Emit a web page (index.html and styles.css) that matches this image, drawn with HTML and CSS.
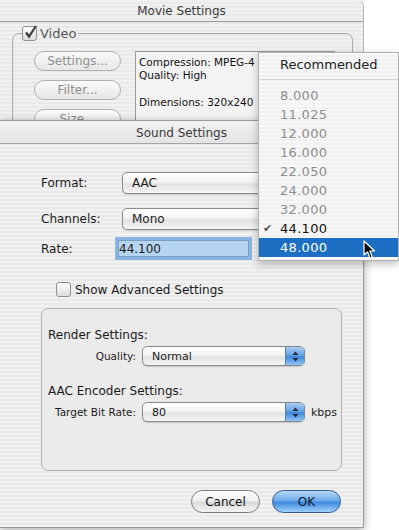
FILE: index.html
```html
<!DOCTYPE html>
<html lang="en">
<head>
    <meta charset="UTF-8">
    <title>Sound Settings</title>
    <link rel="stylesheet" href="styles.css">
</head>
<body>
<div class="desktop">

    <!-- back window -->
    <div class="window movie">
        <div class="titlebar">Movie Settings</div>
        <fieldset class="video-box">
            <legend>
                <span class="check on">
                    <svg width="15" height="15" viewBox="0 0 15 15"><path d="M3 7.5 L6 11.5 L13 1" fill="none" stroke="#3a3a3a" stroke-width="2.2"/></svg>
                </span>
                Video
            </legend>
            <div class="video-content">
                <div class="btn-col">
                    <span class="pill">Settings...</span>
                    <span class="pill">Filter...</span>
                    <span class="pill">Size...</span>
                </div>
                <div class="info">
                    <div>Compression: MPEG-4</div>
                    <div>Quality: High</div>
                    <div class="gap">Dimensions: 320x240</div>
                </div>
            </div>
        </fieldset>
    </div>

    <!-- front window -->
    <div class="window sound">
        <div class="titlebar">Sound Settings</div>
        <div class="sound-body">
            <div class="row row-format">
                <label>Format:</label>
                <div class="popup big"><span>AAC</span><i class="cap"></i></div>
            </div>
            <div class="row row-channels">
                <label>Channels:</label>
                <div class="popup big"><span>Mono</span><i class="cap"></i></div>
            </div>
            <div class="row row-rate">
                <label>Rate:</label>
                <div class="field">44.100</div>
            </div>

            <div class="advanced">
                <span class="check"></span>
                Show Advanced Settings
            </div>

            <div class="group">
                <h3>Render Settings:</h3>
                <div class="sub-row">
                    <label>Quality:</label>
                    <div class="popup small"><span>Normal</span><i class="cap blue"><svg width="7" height="11" viewBox="0 0 7 11"><path d="M3.5 0.5 L6.5 4 H0.5 Z M3.5 10.5 L6.5 7 H0.5 Z" fill="#1d2a44"/></svg></i></div>
                </div>
                <h3 class="second">AAC Encoder Settings:</h3>
                <div class="sub-row">
                    <label>Target Bit Rate:</label>
                    <div class="popup small"><span>80</span><i class="cap blue"><svg width="7" height="11" viewBox="0 0 7 11"><path d="M3.5 0.5 L6.5 4 H0.5 Z M3.5 10.5 L6.5 7 H0.5 Z" fill="#1d2a44"/></svg></i></div>
                    <span class="unit">kbps</span>
                </div>
            </div>

            <div class="buttons">
                <button class="cancel">Cancel</button>
                <button class="ok">OK</button>
            </div>
        </div>
    </div>

    <!-- open popup menu -->
    <div class="menu">
        <div class="menu-head">Recommended</div>
        <ul>
            <li class="off">8.000</li>
            <li class="off">11.025</li>
            <li class="off">12.000</li>
            <li class="off">16.000</li>
            <li class="off">22.050</li>
            <li class="off">24.000</li>
            <li class="off">32.000</li>
            <li class="checked">44.100</li>
            <li class="selected">48.000</li>
        </ul>
    </div>

    <svg class="cursor" width="13" height="20" viewBox="0 0 13 20">
        <path d="M1 1 L1 15 L4.5 11.8 L7 18 L9.2 17 L6.8 11 L11.5 11 Z" fill="#000" stroke="#fff" stroke-width="1.2" stroke-linejoin="round"/>
    </svg>
</div>
</body>
</html>
```

FILE: styles.css
```css
body {
    margin: 0;
    background-color: #fff;
    font-family: "DejaVu Sans", sans-serif;
    color: #1a1a1a;
}
.desktop {
    position: relative;
    width: 399px;
    height: 530px;
    overflow: hidden;
}
.window {
    position: absolute;
    left: 0;
    box-sizing: border-box;
    width: 364px;
    background: repeating-linear-gradient(to bottom, #f1f1f1 0, #f1f1f1 2px, #e9e9e9 2px, #e9e9e9 4px);
}
.titlebar {
    box-sizing: border-box;
    height: 22px;
    line-height: 22px;
    text-align: center;
    font-size: 12px;
    color: #3a3a3a;
    border-bottom: 1px solid #9c9c9c;
}

/* movie settings */
.movie {
    top: 0;
    height: 140px;
    border-right: 1px solid #b4b4b4;
    border-top-right-radius: 6px;
}
.video-box {
    margin: 4px 10px 0 12px;
    padding: 10px 0 0 21px;
    height: 120px;
    border: 1px solid #a9a9a9;
    border-radius: 7px;
}
.video-box legend {
    display: flex;
    align-items: center;
    gap: 3px;
    padding: 0 2px 0 0;
    margin-left: -12px;
    font-size: 13px;
    color: #555;
}
.check {
    display: inline-block;
    box-sizing: border-box;
    width: 15px;
    height: 15px;
    border: 1px solid #8f8f8f;
    border-radius: 3px;
    background: linear-gradient(#ffffff, #dcdcdc);
}
.check svg {
    display: block;
    margin: -2px 0 0 0;
}
.video-content {
    display: flex;
    gap: 14px;
}
.btn-col {
    display: flex;
    flex-direction: column;
    gap: 9px;
}
.pill {
    box-sizing: border-box;
    width: 87px;
    height: 20px;
    line-height: 18px;
    text-align: center;
    font-size: 12px;
    color: #8e8e8e;
    border: 1px solid #b0b0b0;
    border-radius: 10px;
    background: linear-gradient(#fbfbfb, #e6e6e6);
}
.info {
    box-sizing: border-box;
    width: 200px;
    height: 90px;
    padding: 4px 0 0 3px;
    font-size: 10.5px;
    line-height: 13px;
    color: #111;
    border: 1px solid #9a9a9a;
    border-right: none;
    background: #f3f3f3;
}
.info .gap {
    margin-top: 14px;
}

/* sound settings */
.sound {
    top: 120px;
    height: 408px;
    border: 1px solid #9a9a9a;
    border-left: none;
    border-radius: 0 5px 0 0;
    box-shadow: 0 2px 9px rgba(0, 0, 0, 0.35);
}
.sound .titlebar {
    height: 23px;
    line-height: 24px;
    background: linear-gradient(#f2f2f2, #e4e4e4);
    border-bottom-color: #a4a4a4;
}
.sound-body {
    padding: 28px 0 0 41px;
}
.row {
    display: flex;
    align-items: center;
    font-size: 12px;
}
.row label {
    width: 81px;
}
.row-channels {
    margin-top: 14px;
}
.row-rate {
    margin-top: 10px;
}
.popup {
    position: relative;
    box-sizing: border-box;
    display: flex;
    align-items: center;
    border: 1px solid #8a8a8a;
    border-radius: 5px;
    background: linear-gradient(#ffffff, #f3f3f3 45%, #e2e2e2 55%, #f4f4f4);
    box-shadow: 0 1px 1px rgba(0, 0, 0, 0.15);
}
.popup span {
    padding-left: 9px;
}
.popup.big {
    width: 220px;
    height: 22px;
    font-size: 12px;
}
.popup.small {
    width: 163px;
    height: 20px;
    font-size: 11px;
}
.cap {
    margin-left: auto;
    width: 18px;
    align-self: stretch;
    display: flex;
    align-items: center;
    justify-content: center;
    border-radius: 0 4px 4px 0;
}
.cap.blue {
    background: linear-gradient(#a9cdf3, #5f9ee3 50%, #3f86d8 52%, #8ec3f5);
    border-left: 1px solid #5a7fb0;
}
.field {
    box-sizing: border-box;
    width: 131px;
    height: 17px;
    margin-left: -4px;
    padding-left: 0;
    line-height: 17px;
    font-size: 12px;
    background: #b6d5f2;
    border: 1px solid #7d9dc4;
    box-shadow: 0 0 0 3px #8ab4e2;
}
.advanced {
    display: flex;
    align-items: center;
    gap: 4px;
    margin: 25px 0 0 15px;
    font-size: 12px;
}
.group {
    box-sizing: border-box;
    width: 301px;
    height: 163px;
    margin-top: 11px;
    padding: 19px 0 0 6px;
    border: 1px solid #b2b2b2;
    border-radius: 7px;
    background: #ebebeb;
}
.group h3 {
    margin: 0;
    font-size: 12px;
    font-weight: normal;
}
.group h3.second {
    margin-top: 18px;
}
.sub-row {
    display: flex;
    align-items: center;
    margin-top: 4px;
    font-size: 10.5px;
}
.sub-row label {
    width: 88px;
    padding-right: 6px;
    text-align: right;
}
.unit {
    margin-left: 6px;
    font-size: 11px;
}
.buttons {
    display: flex;
    justify-content: flex-end;
    gap: 12px;
    margin: 19px 22px 0 0;
}
.buttons button {
    width: 69px;
    height: 23px;
    font-family: "DejaVu Sans", sans-serif;
    font-size: 12px;
    border-radius: 12px;
    padding: 0;
}
.cancel {
    color: #111;
    border: 1px solid #7c7c7c;
    background: linear-gradient(#ffffff, #f0f0f0 45%, #dadada 55%, #f5f5f5);
}
.ok {
    color: #0c1a33;
    border: 1px solid #365c93;
    background: linear-gradient(#b7d8f7, #6aa8e8 48%, #3a86da 52%, #9fd0fb);
}

/* menu */
.menu {
    position: absolute;
    left: 258px;
    top: 52px;
    box-sizing: border-box;
    width: 141px;
    height: 209px;
    border: 1px solid #b3b3b3;
    background: repeating-linear-gradient(to bottom, #f8f8f8 0, #f8f8f8 2px, #f1f1f1 2px, #f1f1f1 4px);
    box-shadow: 0 3px 8px rgba(0, 0, 0, 0.25);
}
.menu-head {
    height: 26px;
    line-height: 24px;
    padding-left: 21px;
    font-size: 13px;
    color: #222;
    border-bottom: 1px solid #d2d2d2;
}
.menu ul {
    list-style: none;
    margin: 6px 0 0;
    padding: 0;
}
.menu li {
    position: relative;
    height: 19px;
    line-height: 19px;
    padding-left: 21px;
    font-size: 13px;
    letter-spacing: 0.3px;
}
.menu li.off {
    color: #8d8d8d;
}
.menu li.checked {
    color: #111;
}
.menu li.checked::before {
    content: "\2714";
    position: absolute;
    left: 4px;
    font-size: 11px;
    color: #555;
}
.menu li.selected {
    color: #fff;
    background: #1d6fc3;
}
.cursor {
    position: absolute;
    left: 363px;
    top: 240px;
}
```
